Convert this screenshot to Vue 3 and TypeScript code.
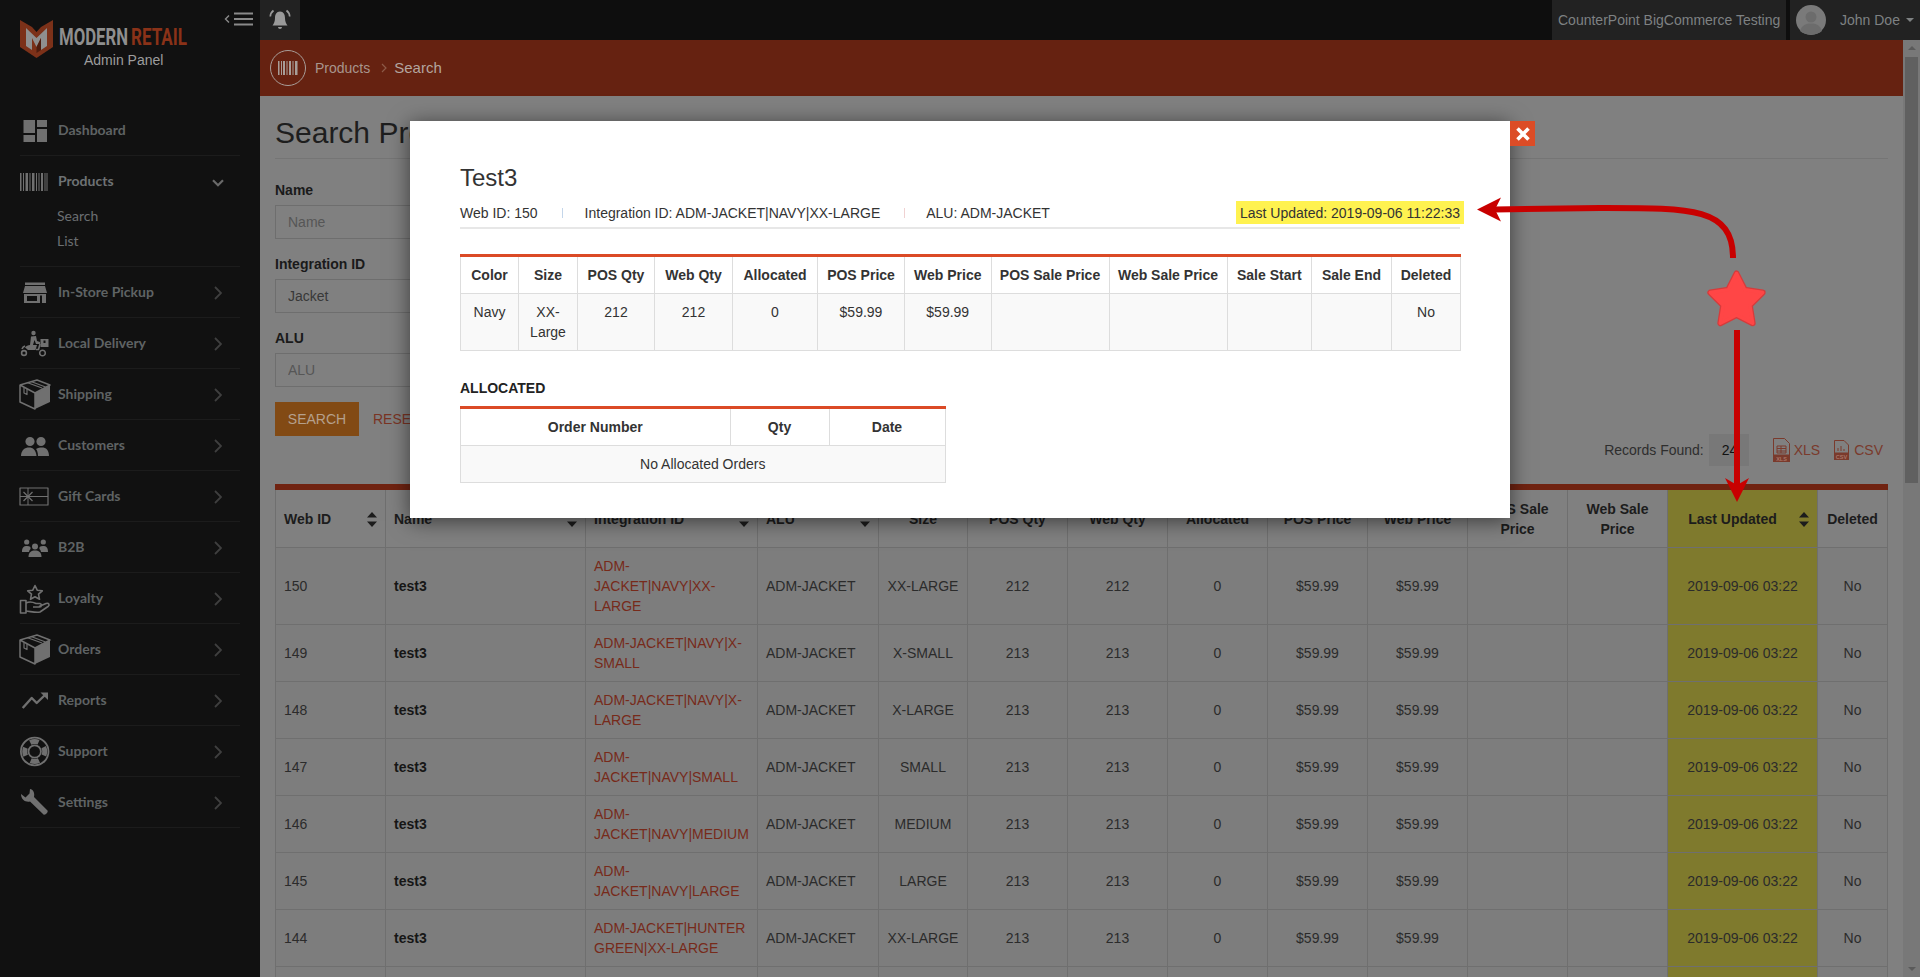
<script setup lang="ts">
interface IconPart {
  d: string
  fill?: string
  stroke?: string
  'stroke-width'?: number
  'stroke-dasharray'?: string
  'stroke-dashoffset'?: number
  'stroke-linecap'?: 'round' | 'butt'
  'stroke-linejoin'?: 'round' | 'miter'
}
interface NavItem {
  label: string
  icon: string
  plain?: boolean
  children?: string[]
}
interface ProductRow {
  webId: number
  integrationId: string
  size: string
  posQty: number
  webQty: number
}

const circle = (cx: number, cy: number, r: number) =>
  `M${cx - r} ${cy}a${r} ${r} 0 1 0 ${2 * r} 0a${r} ${r} 0 1 0 ${-2 * r} 0z`
const line = (d: string, width = 1.5): IconPart => ({
  d,
  fill: 'none',
  stroke: 'currentColor',
  'stroke-width': width,
  'stroke-linejoin': 'round'
})

const boxIcon: IconPart[] = [
  { d: 'M16 15L31 7V24L16 31Z' },
  line('M1 7L18 2L31 7L16 15L1 7V24L16 31V15'),
  line('M8 4.5L23 10M12 3.5L26.5 9', 1.2),
  line('M5 9.5V15L8 16.5V11', 1.2)
]

const starPath =
  'M1736.5 273.5L1744.7 289.7L1762.65 292.5L1749.8 305.3L1752.7 323.25L1736.5 315L1720.3 323.25L1723.2 305.3L1710.35 292.5L1728.3 289.7Z'

const icons: Record<string, IconPart[]> = {
  dashboard: [{ d: 'M4.5 6H16V19H4.5ZM18 6H28V13H18ZM4.5 21H16V28H4.5ZM18 15H28V28H18Z' }],
  barcode: [{
    d: 'M1 8h1.5v18H1zM4 8h1v18H4zM6.5 8h2.5v18H6.5zM10.5 8h1v18h-1zM13 8h2.5v18H13zM17 8h1v18h-1zM19.5 8h1v18h-1zM22 8h2v18h-2zM25.5 8h1v18h-1zM27.5 8h1v18h-1z'
  }],
  store: [
    { d: 'M6 6.5H26V9H6ZM6 10H26L28 17H4Z' },
    { d: 'M5 18H27V27H23V19.5H21V27H5ZM8 20V25H18V20Z', 'fill-rule': 'evenodd' } as IconPart
  ],
  delivery: [
    { d: circle(14.5, 6, 2.2) },
    line(circle(5, 26, 2.4), 1.6),
    line(circle(23.5, 26, 2.8), 1.6),
    { d: 'M12 9.5L17 9L18 14L21 15V17H17L15.5 13L14 18H18L16.5 23H9L6 20.5C7 19 9 18 11 18Z' },
    line('M21 17L19.5 22.5H17M3 22C3.5 20.5 4.5 19.5 6 19', 1.6),
    { d: 'M21.5 12H29.5V20H21.5ZM24.5 13.5V16H26.5V13.5Z', 'fill-rule': 'evenodd' } as IconPart
  ],
  box: boxIcon,
  customers: [
    { d: circle(11, 12.5, 4.6) },
    { d: circle(22, 12.5, 4.6) },
    { d: 'M2 27C2 21 6 18.5 10 18.5S17 21 17.5 27Z' },
    { d: 'M19 27C19 24 18 21 17 20C19 18.5 21 18.5 23 18.5C27 18.5 30 21 30 27Z' }
  ],
  gift: [
    line('M1 8H29V25H1Z', 1.2),
    line('M9 8V25M1 16.5H29', 1),
    line('M4.5 12L13.5 21M13.5 12L4.5 21', 1.2)
  ],
  b2b: [
    { d: circle(7.7, 11, 2.6) },
    { d: circle(24.3, 11, 2.6) },
    { d: circle(16, 15.5, 3) },
    { d: 'M3 21C3 16 5 15 8 15S12 16 11.5 18C10.5 19 10 20 10 21Z' },
    { d: 'M29 21C29 16 27 15 24 15S20 16 20.5 18C21.5 19 22 20 22 21Z' },
    { d: 'M9.5 26C9.5 21 12.5 19.5 16 19.5S22.5 21 22.5 26Z' }
  ],
  loyalty: [
    line('M16 3.5L18.2 8.2L23.3 8.8L19.5 12.2L20.5 17.3L16 14.8L11.5 17.3L12.5 12.2L8.7 8.8L13.8 8.2Z', 1.6),
    line('M1.5 18.5H7V31H1.5Z', 1.6),
    line('M7 21C11 19 14 20 17 21.5H21C23 22 23 25 20.5 25H14M20 24.5L27 21.5C30 20.5 31 23 29 24.5L21 30C17 31 12 29.5 7 29', 1.6)
  ],
  reports: [
    line('M3.7 24L12.7 14L17.7 19L26 11', 2.4),
    { d: 'M21.5 8.5H29V16Z' }
  ],
  support: [
    line(circle(15.7, 16.5, 13.8), 1.8),
    line(circle(15.7, 16.5, 6.2), 1.8),
    { ...line(circle(15.7, 16.5, 10), 5), 'stroke-dasharray': '8.5 7.2', 'stroke-dashoffset': 4.2 }
  ],
  settings: [{
    d: 'M11 3C14 3 16 7 15 11L28.5 24.5C29.5 26 26.5 29.5 24.5 28.5L11 15.5C7 16.5 2 14 2 8L6.5 11.5L10.5 7.5Z'
  }]
}

const navItems: NavItem[] = [
  { label: 'Dashboard', icon: 'dashboard', plain: true },
  { label: 'Products', icon: 'barcode', children: ['Search', 'List'] },
  { label: 'In-Store Pickup', icon: 'store' },
  { label: 'Local Delivery', icon: 'delivery' },
  { label: 'Shipping', icon: 'box' },
  { label: 'Customers', icon: 'customers' },
  { label: 'Gift Cards', icon: 'gift' },
  { label: 'B2B', icon: 'b2b' },
  { label: 'Loyalty', icon: 'loyalty' },
  { label: 'Orders', icon: 'box' },
  { label: 'Reports', icon: 'reports' },
  { label: 'Support', icon: 'support' },
  { label: 'Settings', icon: 'settings' }
]

const columns = [
  { label: 'Web ID', width: 110, sort: true, left: true },
  { label: 'Name', width: 200, sort: true, left: true },
  { label: 'Integration ID', width: 172, sort: true, left: true },
  { label: 'ALU', width: 121, sort: true, left: true },
  { label: 'Size', width: 89 },
  { label: 'POS Qty', width: 100 },
  { label: 'Web Qty', width: 100 },
  { label: 'Allocated', width: 100 },
  { label: 'POS Price', width: 100 },
  { label: 'Web Price', width: 100 },
  { label: 'POS Sale Price', width: 100 },
  { label: 'Web Sale Price', width: 100 },
  { label: 'Last Updated', width: 150, sort: true, mark: true },
  { label: 'Deleted', width: 70 }
]

const rows: ProductRow[] = [
  { webId: 150, integrationId: 'ADM-JACKET|NAVY|XX-LARGE', size: 'XX-LARGE', posQty: 212, webQty: 212 },
  { webId: 149, integrationId: 'ADM-JACKET|NAVY|X-SMALL', size: 'X-SMALL', posQty: 213, webQty: 213 },
  { webId: 148, integrationId: 'ADM-JACKET|NAVY|X-LARGE', size: 'X-LARGE', posQty: 213, webQty: 213 },
  { webId: 147, integrationId: 'ADM-JACKET|NAVY|SMALL', size: 'SMALL', posQty: 213, webQty: 213 },
  { webId: 146, integrationId: 'ADM-JACKET|NAVY|MEDIUM', size: 'MEDIUM', posQty: 213, webQty: 213 },
  { webId: 145, integrationId: 'ADM-JACKET|NAVY|LARGE', size: 'LARGE', posQty: 213, webQty: 213 },
  { webId: 144, integrationId: 'ADM-JACKET|HUNTER GREEN|XX-LARGE', size: 'XX-LARGE', posQty: 213, webQty: 213 }
]

const detailColumns = [
  { label: 'Color', width: 58, value: 'Navy' },
  { label: 'Size', width: 59, value: 'XX-Large' },
  { label: 'POS Qty', width: 77, value: '212' },
  { label: 'Web Qty', width: 78, value: '212' },
  { label: 'Allocated', width: 85, value: '0' },
  { label: 'POS Price', width: 87, value: '$59.99' },
  { label: 'Web Price', width: 86.5, value: '$59.99' },
  { label: 'POS Sale Price', width: 118, value: '' },
  { label: 'Web Sale Price', width: 118, value: '' },
  { label: 'Sale Start', width: 84.5, value: '' },
  { label: 'Sale End', width: 80, value: '' },
  { label: 'Deleted', width: 69, value: 'No' }
]
</script>

<template>
  <div class="page">
    <aside class="sidebar">
      <div class="side-head">
        <svg class="brand" width="200" height="72" viewBox="0 0 200 72">
          <path d="M20 20L32 27L36.5 32L41 27L53 20V47L36.5 58L20 47Z" fill="#7c3119" />
          <path d="M26 28L36.5 38L47 28V46L41 50V38L36.5 47L32 38V50L26 46Z" fill="#8f8f8f" />
          <path d="M36.5 47L41 38V50L36.5 53Z" fill="#4d1c0e" />
          <text x="59" y="45" class="brand-word" fill="#8f8f8f" textLength="69" lengthAdjust="spacingAndGlyphs">MODERN</text>
          <text x="131" y="45" class="brand-word" fill="#8a3218" textLength="56" lengthAdjust="spacingAndGlyphs">RETAIL</text>
          <text x="84" y="65" class="brand-sub" fill="#9d9d9d">Admin Panel</text>
        </svg>
        <button class="toggle" type="button" aria-label="Collapse menu">
          <svg width="30" height="14" viewBox="0 0 30 14" fill="none" stroke="#8a8a8a">
            <path d="M5 3.5L1.5 7L5 10.5" stroke-width="1.4" />
            <path d="M10 1.5H29M10 7H29M10 12.5H29" stroke-width="2" />
          </svg>
        </button>
      </div>
      <nav class="nav">
        <div v-for="item in navItems" :key="item.label" class="nav-group">
          <div class="nav-item" :class="{ open: item.children }">
            <svg class="nav-icon" width="32" height="32" viewBox="0 0 32 32" fill="currentColor">
              <path v-for="(part, i) in icons[item.icon]" :key="i" v-bind="part" />
            </svg>
            <span class="nav-label">{{ item.label }}</span>
            <svg v-if="item.children" class="chev down" width="12" height="8" viewBox="0 0 12 8" fill="none">
              <path d="M1 1.2L6 6.2L11 1.2" stroke="currentColor" stroke-width="2.2" />
            </svg>
            <svg v-else-if="!item.plain" class="chev" width="8" height="14" viewBox="0 0 8 14" fill="none">
              <path d="M1 1L7 7L1 13" stroke="currentColor" stroke-width="1.8" />
            </svg>
          </div>
          <ul v-if="item.children" class="sub">
            <li v-for="child in item.children" :key="child">{{ child }}</li>
          </ul>
        </div>
      </nav>
    </aside>

    <div class="main">
      <header class="topbar">
        <div class="bell">
          <svg width="24" height="24" viewBox="0 0 24 24">
            <path d="M12 3.5C8.5 3.5 7 6.5 7 10C7 13.5 6 15.5 4.5 17.5H19.5C18 15.5 17 13.5 17 10C17 6.5 15.5 3.500 12 3.5Z" fill="#999" />
            <path d="M10 19H14C14 21.5 10 21.5 10 19Z" fill="#999" />
            <path d="M5.5 2.5C3.5 4 2.5 6 2.3 8.5M18.5 2.5C20.5 4 21.5 6 21.7 8.5" stroke="#999" stroke-width="1.7" fill="none" />
          </svg>
        </div>
        <div class="store-name">CounterPoint BigCommerce Testing</div>
        <div class="user">
          <svg class="avatar" width="30" height="30" viewBox="0 0 30 30">
            <circle cx="15" cy="15" r="15" fill="#7a7a7a" />
            <circle cx="15" cy="12" r="5.5" fill="#6c6c6c" />
            <path d="M4 26C6 20 10 18.5 15 18.5S24 20 26 26C20 31 10 31 4 26Z" fill="#6c6c6c" />
          </svg>
          <span>John Doe</span>
          <i class="caret"></i>
        </div>
      </header>

      <div class="body-row">
        <div class="content">
          <div class="crumbs">
            <span class="crumb-icon">
              <svg width="20" height="14" viewBox="0 0 20 14" fill="#a89d98">
                <path d="M0 0h1.5v14H0zM3 0h1v14H3zM5 0h2v14H5zM8.5 0h1v14h-1zM11 0h2v14h-2zM14.5 0h1v14h-1zM17 0h2.5v14H17z" />
              </svg>
            </span>
            <span>Products</span>
            <svg class="crumb-sep" width="6" height="10" viewBox="0 0 6 10" fill="none">
              <path d="M1 1L5 5L1 9" stroke="#8d5a48" stroke-width="1.2" />
            </svg>
            <span class="crumb-current">Search</span>
          </div>

          <section class="panel">
            <h1>Search Products</h1>
            <form class="search-form" @submit.prevent>
              <label>Name</label>
              <input type="text" placeholder="Name" />
              <label>Integration ID</label>
              <input type="text" value="Jacket" />
              <label>ALU</label>
              <input type="text" placeholder="ALU" />
              <div class="actions">
                <button class="btn-search" type="submit">SEARCH</button>
                <a class="reset">RESET</a>
              </div>
            </form>

            <div class="records">
              <span>Records Found:</span>
              <span class="count">24</span>
              <a class="file-link xls">
                <svg width="17" height="24" viewBox="0 0 17 24" fill="none" stroke="#7a3a2c">
                  <path d="M.5 .5H11.5L16.5 5.5V23.5H.5Z" />
                  <path d="M4 8H13V15H4ZM4 10.5H13M4 13H13M8 8V15" />
                  <rect x=".5" y="17" width="16" height="6.5" fill="#7a3a2c" />
                  <text x="8.5" y="22.5" class="file-tag" text-anchor="middle">XLS</text>
                </svg>
                XLS
              </a>
              <a class="file-link">
                <svg width="15" height="20" viewBox="0 0 15 20" fill="none" stroke="#7a3a2c">
                  <path d="M.5 .5H10L14.5 5V19.5H.5Z" />
                  <path d="M4 11V8M7 11V6M10 11V9" />
                  <rect x=".5" y="13" width="14" height="6.5" fill="#7a3a2c" />
                  <text x="7.5" y="18.5" class="file-tag" text-anchor="middle">CSV</text>
                </svg>
                CSV
              </a>
            </div>

            <table class="grid">
              <colgroup>
                <col v-for="col in columns" :key="col.label" :style="{ width: col.width + 'px' }" />
              </colgroup>
              <thead>
                <tr>
                  <th
                    v-for="col in columns"
                    :key="col.label"
                    :class="{ left: col.left, mark: col.mark, sorted: col.sort && !col.left }"
                  >
                    {{ col.label }}
                    <svg v-if="col.sort" class="sort" width="10" height="15" viewBox="0 0 10 15" fill="#1c1c1c">
                      <path d="M5 0L10 5.5H0ZM5 15L0 9.5H10Z" />
                    </svg>
                  </th>
                </tr>
              </thead>
              <tbody>
                <tr v-for="row in rows" :key="row.webId">
                  <td class="left">{{ row.webId }}</td>
                  <td class="left name">test3</td>
                  <td class="left link">{{ row.integrationId }}</td>
                  <td class="left">ADM-JACKET</td>
                  <td>{{ row.size }}</td>
                  <td>{{ row.posQty }}</td>
                  <td>{{ row.webQty }}</td>
                  <td>0</td>
                  <td>$59.99</td>
                  <td>$59.99</td>
                  <td></td>
                  <td></td>
                  <td class="mark">2019-09-06 03:22</td>
                  <td>No</td>
                </tr>
                <tr class="next-row">
                  <td v-for="col in columns" :key="col.label" :class="{ mark: col.mark }"></td>
                </tr>
              </tbody>
            </table>
          </section>
        </div>

        <div class="scrollbar">
          <i class="arrow-up"></i>
          <div class="thumb"></div>
          <i class="arrow-down"></i>
        </div>
      </div>
    </div>

    <div class="modal">
      <button class="modal-close" type="button" aria-label="Close">
        <svg width="14" height="14" viewBox="0 0 14 14">
          <path d="M1.5 1.5L12.5 12.5M12.5 1.5L1.5 12.5" stroke="#fff" stroke-width="3.6" />
        </svg>
      </button>
      <h2>Test3</h2>
      <div class="meta">
        <span>Web ID: 150</span>
        <i class="meta-sep blue"></i>
        <span>Integration ID: ADM-JACKET|NAVY|XX-LARGE</span>
        <i class="meta-sep pink"></i>
        <span>ALU: ADM-JACKET</span>
        <span class="updated">Last Updated: 2019-09-06 11:22:33</span>
      </div>

      <table class="detail">
        <colgroup>
          <col v-for="col in detailColumns" :key="col.label" :style="{ width: col.width + 'px' }" />
        </colgroup>
        <thead>
          <tr>
            <th v-for="col in detailColumns" :key="col.label">{{ col.label }}</th>
          </tr>
        </thead>
        <tbody>
          <tr>
            <td v-for="col in detailColumns" :key="col.label">{{ col.value }}</td>
          </tr>
        </tbody>
      </table>

      <h3>ALLOCATED</h3>
      <table class="detail allocated">
        <colgroup>
          <col style="width: 269.5px" />
          <col style="width: 99px" />
          <col style="width: 116px" />
        </colgroup>
        <thead>
          <tr>
            <th>Order Number</th>
            <th>Qty</th>
            <th>Date</th>
          </tr>
        </thead>
        <tbody>
          <tr>
            <td colspan="3">No Allocated Orders</td>
          </tr>
        </tbody>
      </table>
    </div>

    <!-- callout drawn on top of the screenshot -->
    <svg class="callout" width="1920" height="977" viewBox="0 0 1920 977" fill="none">
      <path d="M1495 209.5L1600 208C1690 208 1733 207 1733 258" stroke="#c80000" stroke-width="6" />
      <path d="M1477 209.5L1501 197.5L1495 209.5L1501 221.5Z" fill="#c80000" />
      <path :d="starPath" fill="#ff4646" stroke="#d43c3c" stroke-width="6" stroke-linejoin="round" />
      <path :d="starPath" fill="#ff4646" stroke="#ff4646" stroke-width="3.5" stroke-linejoin="round" />
      <path d="M1737 330V490" stroke="#c80000" stroke-width="6" />
      <path d="M1737 502L1725 478L1737 485L1749 478Z" fill="#c80000" />
    </svg>
  </div>
</template>

<style scoped>
.page {
  position: relative;
  display: flex;
  width: 100%;
  height: 977px;
  overflow: hidden;
  font-family: 'Liberation Sans', Arial, sans-serif;
  font-size: 14px;
  line-height: 20px;
  color: #2b2b2b;
}

/* sidebar */
.sidebar {
  flex: 0 0 260px;
  background: #111;
}

.side-head {
  display: flex;
  height: 105px;
}

.brand {
  display: block;
  flex: none;
}

.brand-word {
  font-family: 'Roboto', 'Liberation Sans', sans-serif;
  font-weight: 700;
  font-size: 24px;
}

.brand-sub {
  font-family: 'Liberation Sans', sans-serif;
  font-size: 14px;
}

.toggle {
  height: 14px;
  margin: 12px 0 0 24px;
  padding: 0;
  border: 0;
  background: none;
}

.toggle svg {
  display: block;
}

.nav {
  padding: 0 20px;
  font-family: 'Lato', 'Liberation Sans', sans-serif;
}

.nav-group {
  border-bottom: 1px solid #1c1c1c;
}

.nav-item {
  display: flex;
  align-items: center;
  height: 50px;
  color: #707070;
}

.nav-icon {
  flex: none;
  margin-left: -1px;
  margin-right: 7px;
}

.nav-label {
  font-weight: 700;
  color: #5f6364;
}

.open .nav-label {
  color: #6e7274;
}

.chev {
  margin-top: 2px;
  margin-left: auto;
  margin-right: 18px;
  color: #3f3f3f;
}

.chev.down {
  margin-top: 3px;
  margin-right: 16px;
  color: #6a6a6a;
}

.sub {
  list-style: none;
  margin: -3px 0 0;
  padding: 0 0 13px 37px;
  color: #6b6f71;
}

.sub li {
  height: 25px;
  line-height: 25px;
}

/* top bar */
.main {
  flex: 1;
  display: flex;
  flex-direction: column;
  min-width: 0;
  background: #808080;
}

.topbar {
  flex: 0 0 40px;
  display: flex;
  background: #0e0e0e;
  color: #7e8182;
}

.bell {
  display: flex;
  align-items: center;
  justify-content: center;
  width: 40px;
  background: #222;
}

.store-name {
  box-sizing: border-box;
  margin-left: auto;
  width: 234px;
  padding-left: 6px;
  line-height: 40px;
  background: #222;
}

.user {
  box-sizing: border-box;
  display: flex;
  align-items: center;
  width: 130px;
  margin-left: 4px;
  padding-left: 6px;
  background: #222;
}

.avatar {
  margin-right: 14px;
}

.caret {
  margin-left: 6px;
  border-top: 4px solid #7e8182;
  border-left: 4px solid transparent;
  border-right: 4px solid transparent;
}

.body-row {
  flex: 1;
  display: flex;
  min-height: 0;
}

.content {
  flex: 1;
  min-width: 0;
}

/* breadcrumb */
.crumbs {
  display: flex;
  align-items: center;
  height: 56px;
  padding-left: 10px;
  background: #662211;
  color: #a8958d;
}

.crumb-icon {
  display: flex;
  align-items: center;
  justify-content: center;
  box-sizing: border-box;
  width: 36px;
  height: 36px;
  margin-right: 9px;
  border: 1.5px solid #a89d98;
  border-radius: 50%;
}

.crumb-sep {
  margin: 0 7px 0 11px;
}

.crumb-current {
  font-size: 15px;
  color: #b3a59f;
}

/* search form */
.panel {
  padding: 20px 15px 0;
}

h1 {
  margin: 0;
  padding-bottom: 9px;
  border-bottom: 1px solid #757575;
  font-size: 30px;
  font-weight: 400;
  line-height: 33px;
  color: #1e1e1e;
}

.search-form {
  display: flex;
  flex-direction: column;
  align-items: flex-start;
  margin: 21px 0 -2px;
}

.search-form label {
  margin-bottom: 5px;
  font-weight: 700;
  color: #1a1a1a;
}

.search-form input {
  box-sizing: border-box;
  width: 400px;
  height: 34px;
  margin-bottom: 15px;
  padding: 0 12px;
  border: 1px solid #6e6e6e;
  background: #808080;
  font: inherit;
  color: #383838;
  outline: none;
}

.search-form input::placeholder {
  color: #565656;
  opacity: 1;
}

.actions {
  display: flex;
  align-items: center;
}

.btn-search {
  width: 84px;
  height: 34px;
  padding: 0;
  border: 0;
  background: #824a14;
  font: inherit;
  color: #b5a08c;
}

.reset {
  margin-left: 14px;
  color: #7a3424;
}

.records {
  display: flex;
  align-items: center;
  justify-content: flex-end;
  height: 32px;
  margin-bottom: 18px;
  padding-right: 5px;
  color: #2e2e2e;
}

.count {
  box-sizing: border-box;
  width: 40px;
  height: 32px;
  margin: 0 24px 0 5px;
  padding-left: 13px;
  line-height: 32px;
  background: #787878;
  color: #111;
}

.file-link {
  display: flex;
  align-items: center;
  color: #7a3a2c;
}

.file-link svg {
  margin-right: 4px;
}

.file-link.xls {
  margin-right: 14px;
}

.file-link:not(.xls) svg {
  margin-right: 5px;
}

.file-tag {
  fill: #a87568;
  stroke: none;
  font-size: 5.5px;
  font-weight: 700;
}

/* main table */
.grid {
  width: 1613px;
  border-collapse: collapse;
  border-top: 6px solid #702311;
  table-layout: fixed;
}

.grid th,
.grid td {
  position: relative;
  padding: 8px;
  border: 1px solid #6f6f6f;
  text-align: center;
  vertical-align: middle;
  overflow-wrap: normal;
}

.grid th {
  padding-top: 9px;
  font-weight: 700;
  color: #1c1c1c;
}

.grid td {
  background: #7d7d7d;
}

.grid .left {
  text-align: left;
}

.grid .name {
  font-weight: 700;
  color: #161616;
}

.grid .link {
  color: #772a1a;
}

.grid .mark {
  background: #7f7a2d;
}

.grid th.sorted {
  padding-right: 28px;
}

.next-row {
  height: 57px;
}

.sort {
  position: absolute;
  top: 50%;
  right: 8px;
  margin-top: -7px;
}

.scrollbar {
  position: relative;
  flex: 0 0 17px;
  background: #787878;
}

.thumb {
  position: absolute;
  top: 17px;
  left: 2px;
  right: 2px;
  height: 426px;
  background: #606060;
}

.arrow-up,
.arrow-down {
  position: absolute;
  left: 5px;
  border-left: 4px solid transparent;
  border-right: 4px solid transparent;
}

.arrow-up {
  top: 6px;
  border-bottom: 4px solid #5a5a5a;
}

.arrow-down {
  bottom: 6px;
  border-top: 4px solid #5a5a5a;
}

/* modal */
.modal {
  position: absolute;
  top: 121px;
  left: 410px;
  box-sizing: border-box;
  width: 1100px;
  height: 397px;
  padding: 44px 50px 0;
  background: #fff;
  box-shadow: 0 3px 20px rgba(0, 0, 0, 0.55);
  color: #333;
}

.modal-close {
  position: absolute;
  top: 0;
  left: 100%;
  display: flex;
  align-items: center;
  justify-content: center;
  width: 25px;
  height: 25px;
  padding: 0;
  border: 0;
  background: #dc4c26;
}

h2 {
  margin: 0;
  font-size: 24px;
  font-weight: 400;
  line-height: 26px;
  color: #333;
}

.meta {
  display: flex;
  align-items: center;
  margin-top: 10px;
  padding-bottom: 3px;
  border-bottom: 2px solid #e7e7e7;
}

.meta-sep {
  width: 1px;
  height: 10px;
  margin: 0 21px 0 24px;
}

.meta-sep.blue {
  margin-right: 22px;
  background: #c4d6ea;
}

.meta-sep.pink {
  background: #f0d2d2;
}

.updated {
  margin-left: auto;
  margin-right: -4px;
  padding: 1.5px 4px;
  background: #fff250;
}

.detail {
  width: 998.5px;
  margin-top: 25px;
  border-collapse: collapse;
  border-top: 3px solid #db4a26;
  table-layout: fixed;
}

.detail th,
.detail td {
  padding: 8px;
  border: 1px solid #ddd;
  text-align: center;
  vertical-align: top;
}

.detail th {
  font-weight: 700;
  color: #333;
}

.detail td {
  background: #f9f9f9;
}

.detail tbody tr {
  height: 57px;
}

h3 {
  margin: 27px 0 0;
  font-size: 14px;
  font-weight: 700;
  line-height: 20px;
  color: #222;
}

.detail.allocated {
  width: 484.5px;
  margin-top: 8px;
}

.detail.allocated tbody tr {
  height: 37px;
}

.callout {
  position: absolute;
  top: 0;
  left: 0;
  pointer-events: none;
}
</style>

<style>
html,
body {
  margin: 0;
  overflow: hidden;
}
</style>
